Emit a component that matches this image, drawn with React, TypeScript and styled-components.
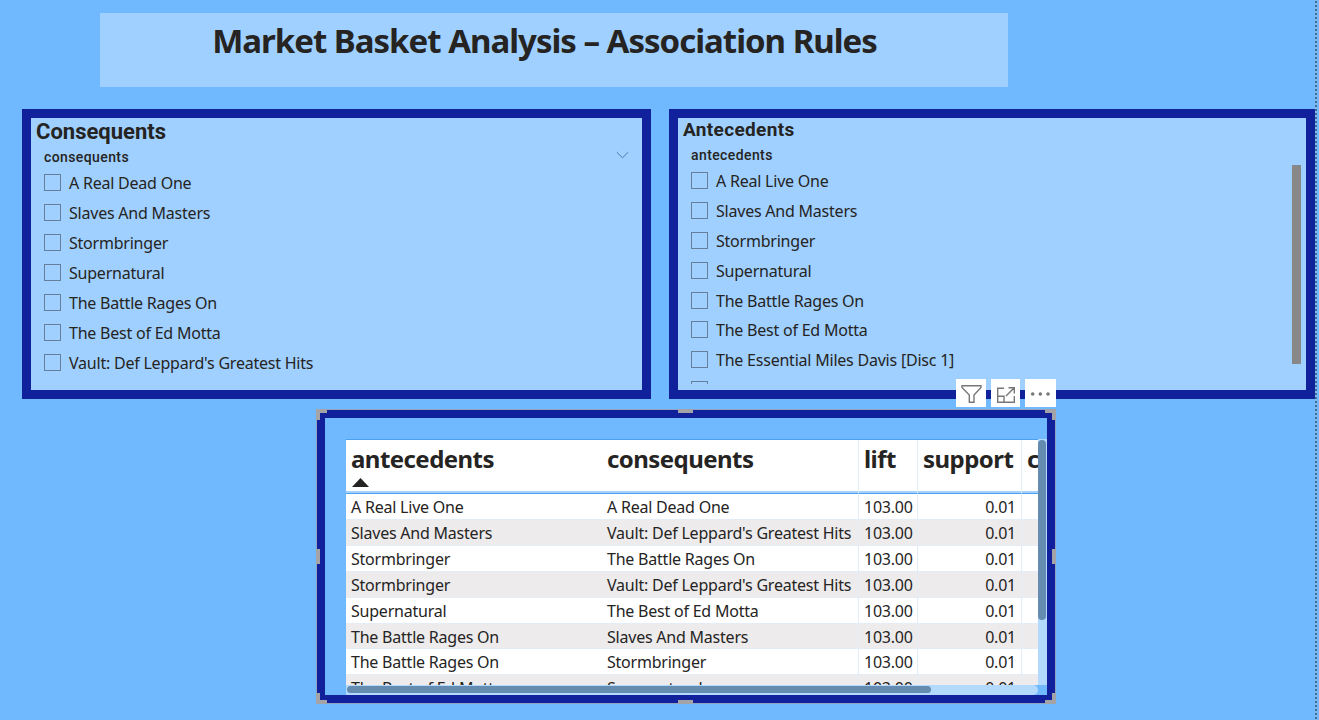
import React from "react";
import styled, { createGlobalStyle } from "styled-components";

const Global = createGlobalStyle`
  * { box-sizing: border-box; }
  body { margin: 0; background: #70b9ff; }
`;

const sans = `"Noto Sans", "Open Sans", sans-serif`;
const din = `Roboto, "Liberation Sans", sans-serif`;

const Page = styled.div`
  position: relative;
  display: flex;
  flex-direction: column;
  width: 1319px;
  height: 720px;
  overflow: hidden;
  background: #70b9ff;
  color: #252423;
  font-family: ${sans};
`;

const PageEdge = styled.div`
  position: absolute;
  top: 0;
  right: 2px;
  width: 2px;
  height: 100%;
  background: repeating-linear-gradient(#83baec 0 1px, #3f6c98 1px 3px, #83baec 3px 4px);
`;

const TitleBox = styled.header`
  display: flex;
  justify-content: center;
  width: 908px;
  height: 74px;
  margin: 13px 0 0 100px;
  padding-right: 19px;
  background: #a0d0ff;
`;

const Title = styled.h1`
  margin: 0;
  font-size: 33px;
  font-weight: 700;
  line-height: 55px;
  letter-spacing: -1px;
  white-space: nowrap;
`;

const Slicers = styled.div`
  display: flex;
  gap: 18px;
  margin: 22px 0 0 22px;
`;

const SlicerCard = styled.section<{ $width: number }>`
  position: relative;
  display: flex;
  flex-direction: column;
  flex: none;
  width: ${(p) => p.$width}px;
  height: 290px;
  border: 9px solid #11209b;
  background: #a0d0ff;
`;

const SlicerTitle = styled.h2<{ $size: number; $height: number; $gap: number; $track: number }>`
  margin: 0 0 ${(p) => p.$gap}px 5px;
  font: 700 ${(p) => p.$size}px/${(p) => p.$height}px ${din};
  letter-spacing: ${(p) => p.$track}px;
`;

const FieldRow = styled.div`
  display: flex;
  justify-content: space-between;
  height: 24px;
  padding: 0 13px;
`;

const FieldName = styled.span`
  font: 500 14px/22px ${din};
  letter-spacing: 0.4px;
`;

const Chevron = styled.svg`
  width: 13px;
  height: 8px;
  margin-top: 5px;
`;

const Options = styled.ul<{ $pitch: number }>`
  flex: 1;
  margin: 0 0 6px;
  padding: 0 0 0 13px;
  overflow: hidden;
  list-style: none;

  li {
    display: flex;
    align-items: flex-start;
    gap: 8px;
    height: ${(p) => p.$pitch}px;
  }
`;

const Check = styled.span`
  flex: none;
  width: 17px;
  height: 17px;
  margin-top: 4px;
  border: 1px solid #66809b;
`;

const Label = styled.span`
  padding-top: 1px;
  font-size: 16px;
  line-height: 24px;
  letter-spacing: -0.22px;
  white-space: nowrap;
`;

const SlicerScroll = styled.div`
  position: absolute;
  top: 47px;
  right: 5px;
  width: 9px;
  height: 199px;
  background: #888888;
`;

const TableVisual = styled.section`
  position: relative;
  width: 740px;
  height: 295px;
  margin: 10px 0 0 316px;
  border: 1px solid #8fa3c0;
`;

const TableFrame = styled.div`
  height: 293px;
  padding: 21px 0 0 21px;
  border: 8px solid #11209b;
`;

const TableRow = styled.div`
  display: flex;
`;

const Viewport = styled.div`
  width: 692px;
  height: 246px;
  overflow: hidden;
  border-top: 1px solid #4da0ee;
  background: #fff;
`;

const Grid = styled.table`
  width: 760px;
  border-collapse: separate;
  border-spacing: 0;
  table-layout: fixed;

  th, td {
    padding: 0 5px;
    text-align: left;
    white-space: nowrap;
    border-right: 1px solid #e3edf6;
  }
  th:first-child, td:first-child { border-right: 0; }
`;

const Head = styled.th`
  position: relative;
  height: 54px;
  vertical-align: top;
  font-size: 24px;
  font-weight: 700;
  line-height: 37px;
  letter-spacing: -0.55px;
  && { border-bottom: 1px solid #4a9ff0; }
  box-shadow: inset 0 -2px #a5d2fd;
`;

const SortMark = styled.svg`
  position: absolute;
  left: 6px;
  top: 38px;
  width: 17px;
  height: 9px;
`;

const Cell = styled.td<{ $odd: boolean; $height: number; $num?: boolean }>`
  height: ${(p) => p.$height}px;
  vertical-align: top;
  font-size: 16px;
  line-height: 22px;
  letter-spacing: -0.22px;
  background: ${(p) => (p.$odd ? "#edebec" : "#fff")};
  border-bottom: 1px solid #e4edf5;
  && {
    padding-top: 2px;
    text-align: ${(p) => (p.$num ? "right" : "left")};
  }
`;

const VTrack = styled.div`
  width: 9px;
  height: 246px;
  padding: 1px 1px 0 0;
  background: #b3d9ff;
`;

const VThumb = styled.div`
  height: 180px;
  border-radius: 4px;
  background: #658bb0;
`;

const HTrack = styled.div`
  width: 692px;
  height: 10px;
  padding: 1px;
  border-radius: 0 5px 5px 0;
  background: #b3d9ff;
`;

const HThumb = styled.div`
  width: 584px;
  height: 7px;
  border-radius: 4px;
  background: #658bb0;
`;

const Handle = styled.i<{ $x: number; $y: number; $w: number; $h: number }>`
  position: absolute;
  left: ${(p) => p.$x}px;
  top: ${(p) => p.$y}px;
  width: ${(p) => p.$w}px;
  height: ${(p) => p.$h}px;
  background: #a3a3a8;
`;

const Toolbar = styled.div`
  position: absolute;
  right: -1px;
  top: -31px;
  display: flex;
  gap: 5px;
`;

const ToolButton = styled.button<{ $w: number }>`
  display: block;
  width: ${(p) => p.$w}px;
  height: 28px;
  padding: 0;
  border: 0;
  background: #fff;

  svg { display: block; width: 100%; height: 28px; }
`;

const consequents = [
  "A Real Dead One",
  "Slaves And Masters",
  "Stormbringer",
  "Supernatural",
  "The Battle Rages On",
  "The Best of Ed Motta",
  "Vault: Def Leppard's Greatest Hits",
];

const antecedents = [
  "A Real Live One",
  "Slaves And Masters",
  "Stormbringer",
  "Supernatural",
  "The Battle Rages On",
  "The Best of Ed Motta",
  "The Essential Miles Davis [Disc 1]",
  "Vault: Def Leppard's Greatest Hits",
];

const rules = [
  ["A Real Live One", "A Real Dead One"],
  ["Slaves And Masters", "Vault: Def Leppard's Greatest Hits"],
  ["Stormbringer", "The Battle Rages On"],
  ["Stormbringer", "Vault: Def Leppard's Greatest Hits"],
  ["Supernatural", "The Best of Ed Motta"],
  ["The Battle Rages On", "Slaves And Masters"],
  ["The Battle Rages On", "Stormbringer"],
  ["The Best of Ed Motta", "Supernatural"],
];

const handles = [
  [-1, -1, 11, 4], [-1, -1, 4, 11],
  [728, -1, 11, 4], [735, -1, 4, 11],
  [-1, 290, 11, 4], [-1, 283, 4, 11],
  [728, 290, 11, 4], [735, 283, 4, 11],
  [361, -1, 15, 4], [361, 290, 15, 4],
  [-1, 139, 4, 15], [735, 139, 4, 15],
];

const OptionList = ({ items, pitch }: { items: string[]; pitch: number }) => (
  <Options $pitch={pitch}>
    {items.map((t) => (
      <li key={t}>
        <Check />
        <Label>{t}</Label>
      </li>
    ))}
  </Options>
);

export default function App() {
  return (
    <Page>
      <Global />
      <TitleBox>
        <Title>Market Basket Analysis – Association Rules</Title>
      </TitleBox>
      <Slicers>
        <SlicerCard $width={629}>
          <SlicerTitle $size={22} $height={28} $gap={0} $track={0}>Consequents</SlicerTitle>
          <FieldRow>
            <FieldName>consequents</FieldName>
            <Chevron viewBox="0 0 13 8" fill="none" stroke="#4f7ca6">
              <path d="M.8 1.2 6.5 6.8 12.2 1.2" />
            </Chevron>
          </FieldRow>
          <OptionList items={consequents} pitch={30} />
        </SlicerCard>
        <SlicerCard $width={646}>
          <SlicerTitle $size={19} $height={24} $gap={2} $track={0.35}>Antecedents</SlicerTitle>
          <FieldRow>
            <FieldName>antecedents</FieldName>
          </FieldRow>
          <OptionList items={antecedents} pitch={29.9} />
          <SlicerScroll />
        </SlicerCard>
      </Slicers>
      <TableVisual>
        <TableFrame>
          <TableRow>
            <Viewport>
              <Grid>
                <colgroup>
                  <col width="256" />
                  <col width="257" />
                  <col width="59" />
                  <col width="104" />
                  <col width="84" />
                </colgroup>
                <thead>
                  <tr>
                    <Head>
                      antecedents
                      <SortMark viewBox="0 0 17 9"><path d="M0 9 8.5 0 17 9z" fill="#252423" /></SortMark>
                    </Head>
                    <Head>consequents</Head>
                    <Head>lift</Head>
                    <Head>support</Head>
                    <Head>c</Head>
                  </tr>
                </thead>
                <tbody>
                  {rules.map(([a, c], i) => {
                    const cell = { $odd: i % 2 === 1, $height: i === 5 ? 25 : 26 };
                    return (
                      <tr key={i}>
                        <Cell {...cell}>{a}</Cell>
                        <Cell {...cell}>{c}</Cell>
                        <Cell {...cell} $num>103.00</Cell>
                        <Cell {...cell} $num>0.01</Cell>
                        <Cell {...cell} />
                      </tr>
                    );
                  })}
                </tbody>
              </Grid>
            </Viewport>
            <VTrack><VThumb /></VTrack>
          </TableRow>
          <HTrack><HThumb /></HTrack>
        </TableFrame>
        {handles.map(([x, y, w, h], i) => (
          <Handle key={i} $x={x} $y={y} $w={w} $h={h} />
        ))}
        <Toolbar>
          <ToolButton $w={30} aria-label="Filters">
            <svg viewBox="0 0 30 28" fill="none" stroke="#777" strokeWidth="1.4">
              <path d="M6 6.7H25V8.5L18 16V23.3H13.3V16L6 8.5Z" />
            </svg>
          </ToolButton>
          <ToolButton $w={29} aria-label="Focus mode">
            <svg viewBox="0 0 29 28" fill="none" stroke="#777" strokeWidth="1.4">
              <path d="M13 9.2H6.7V23.3H23.3V17M6.7 17.3H13V23.3M15 17 23.3 8.7M17.5 8.7H23.3V14.5" />
            </svg>
          </ToolButton>
          <ToolButton $w={31} aria-label="More options">
            <svg viewBox="0 0 31 28" fill="#777">
              <circle cx="7.7" cy="15" r="1.8" />
              <circle cx="15.3" cy="15" r="1.8" />
              <circle cx="23" cy="15" r="1.8" />
            </svg>
          </ToolButton>
        </Toolbar>
      </TableVisual>
      <PageEdge />
    </Page>
  );
}
